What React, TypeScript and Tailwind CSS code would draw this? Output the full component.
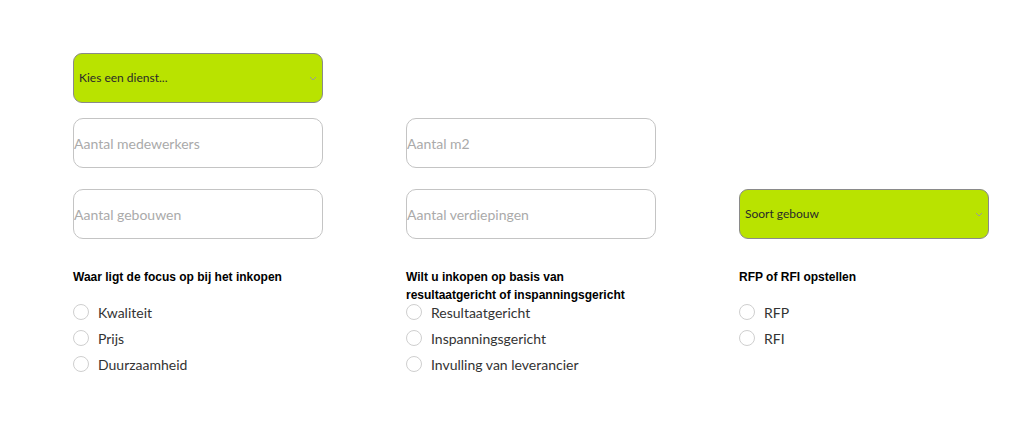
import React from 'react';

const lato = { fontFamily: 'Lato, "Open Sans", sans-serif' };

const Chevron = () => (
  <svg width="8" height="5" viewBox="0 0 8 5" className="shrink-0">
    <path d="M1 1l3 3 3-3" fill="none" stroke="#9a9a9a" strokeWidth="1" />
  </svg>
);

const GreenSelect: React.FC<{ label: string }> = ({ label }) => (
  <div className="flex h-[50px] w-[250px] items-center justify-between rounded-[9px] border border-[#8a8a8a] bg-[#b9e300] pl-[5px] pr-[5px]">
    <span className="text-[12px] text-[#2a2a2a]" style={lato}>{label}</span>
    <Chevron />
  </div>
);

const TextInput: React.FC<{ placeholder: string }> = ({ placeholder }) => (
  <input
    type="text"
    placeholder={placeholder}
    className="h-[50px] w-[250px] rounded-[10px] border border-[#c4c4c4] bg-white p-0 text-[14px] text-[#333] outline-none placeholder:text-[#aaaaaa]"
    style={lato}
  />
);

const RadioGroup: React.FC<{ title: string[]; options: string[] }> = ({ title, options }) => (
  <div className="flex flex-col">
    <div className="h-[31px] text-[12px] font-bold leading-[18px] text-black" style={{ fontFamily: '"Liberation Sans", Arial, sans-serif' }}>
      {title.map((t) => (
        <div key={t}>{t}</div>
      ))}
    </div>
    <div className="flex flex-col">
      {options.map((o) => (
        <label key={o} className="flex h-[26px] items-center gap-[9px]">
          <span className="h-[16px] w-[16px] rounded-full border border-[#cfcfcf] bg-white" />
          <span className="text-[14px] text-[#333]" style={lato}>{o}</span>
        </label>
      ))}
    </div>
  </div>
);

export default function App() {
  return (
    <div className="min-h-screen bg-white pl-[73px] pt-[53px]">
      <div className="grid grid-cols-[250px_250px_250px] gap-x-[83px]">
        <div className="col-span-3">
          <GreenSelect label="Kies een dienst..." />
        </div>
        <div className="mt-[15px]"><TextInput placeholder="Aantal medewerkers" /></div>
        <div className="mt-[15px]"><TextInput placeholder="Aantal m2" /></div>
        <div />
        <div className="mt-[21px]"><TextInput placeholder="Aantal gebouwen" /></div>
        <div className="mt-[21px]"><TextInput placeholder="Aantal verdiepingen" /></div>
        <div className="mt-[21px]"><GreenSelect label="Soort gebouw" /></div>
        <div className="mt-[29px]">
          <RadioGroup title={['Waar ligt de focus op bij het inkopen']} options={['Kwaliteit', 'Prijs', 'Duurzaamheid']} />
        </div>
        <div className="mt-[29px]">
          <RadioGroup
            title={['Wilt u inkopen op basis van', 'resultaatgericht of inspanningsgericht']}
            options={['Resultaatgericht', 'Inspanningsgericht', 'Invulling van leverancier']}
          />
        </div>
        <div className="mt-[29px]">
          <RadioGroup title={['RFP of RFI opstellen']} options={['RFP', 'RFI']} />
        </div>
      </div>
    </div>
  );
}
